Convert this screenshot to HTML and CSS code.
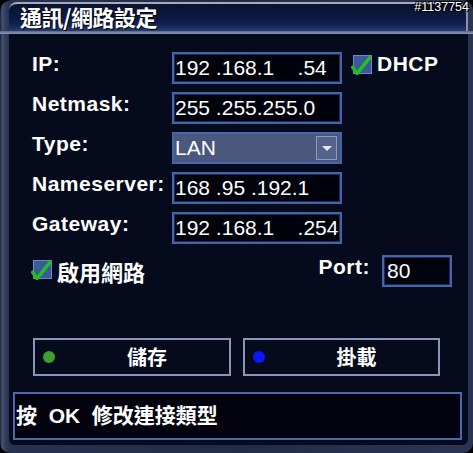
FILE: index.html
```html
<!DOCTYPE html>
<html>
<head>
<meta charset="utf-8">
<link rel="stylesheet" href="styles.css">
</head>
<body>
<div class="window">
  <div class="title-row">
    <div class="titlebar"><span class="title">通訊/網路設定</span></div>
  </div>
  <div class="sep"></div>
  <div class="frame-body">
    <div class="panel">
      <div class="form">
        <div class="label">IP:</div>
        <div class="field">192 .168.1    .54</div>
        <div class="check-cell">
          <svg class="check" width="22" height="20" viewBox="0 0 22 20"><rect x="2.5" y="0.5" width="18" height="18" fill="#3a5a9c" stroke="#6a88c4"/><path d="M0.8 11 L6 18.6 L19.5 1.6" fill="none" stroke="#1fc21f" stroke-width="3.4" stroke-linejoin="round"/></svg>
          <span class="label">DHCP</span>
        </div>
        <div class="label">Netmask:</div>
        <div class="field">255 .255.255.0</div>
        <div></div>
        <div class="label">Type:</div>
        <div class="field dropdown"><span>LAN</span><span class="arrow"><span class="tri"></span></span></div>
        <div></div>
        <div class="label">Nameserver:</div>
        <div class="field">168 .95 .192.1</div>
        <div></div>
        <div class="label">Gateway:</div>
        <div class="field">192 .168.1    .254</div>
        <div></div>
      </div>
      <div class="opts">
        <div class="opt-left">
          <svg class="check check-net" width="22" height="20" viewBox="0 0 22 20"><rect x="2.5" y="0.5" width="18" height="18" fill="#3a5a9c" stroke="#6a88c4"/><path d="M0.8 11 L6 18.6 L19.5 1.6" fill="none" stroke="#1fc21f" stroke-width="3.4" stroke-linejoin="round"/></svg>
          <span class="cjk-label">啟用網路</span>
        </div>
        <div class="opt-right">
          <span class="label">Port:</span>
          <div class="field port">80</div>
        </div>
      </div>
      <div class="buttons">
        <div class="btn"><span class="dot dot-green"></span><span class="btn-text">儲存</span></div>
        <div class="btn btn-2"><span class="dot dot-blue"></span><span class="btn-text">掛載</span></div>
      </div>
      <div class="status"><span class="status-text">按  OK  修改連接類型</span></div>
    </div>
  </div>
  <div class="watermark">#1137754</div>
</div>
</body>
</html>
```
FILE: styles.css
```css
html, body {
  margin: 0;
  padding: 0;
  background: #000;
}
body {
  width: 473px;
  height: 453px;
  overflow: hidden;
}
.window {
  position: relative;
  width: 473px;
  height: 453px;
  box-sizing: border-box;
  display: flex;
  flex-direction: column;
  border-radius: 12px 10px 10px 10px;
  background: linear-gradient(to right, #141a2c 0, #46526e 2px, #33405e 5px, #27324e 9px, #222c46 50%, #2a3552 100%);
  font-family: "Liberation Sans", "Noto Sans CJK TC", sans-serif;
  color: #fff;
  overflow: hidden;
}
.title-row {
  height: 31px;
  box-sizing: border-box;
  padding: 2px 5px 0 9px;
}
.titlebar {
  height: 29px;
  box-sizing: border-box;
  border-top: 2px solid #a3abbd;
  border-right: 2px solid #8a93ab;
  border-radius: 8px 12px 0 0;
  background: linear-gradient(to bottom, #0a122e 0%, #0c1a44 60%, #15295a 85%, #2a3f72 100%);
  padding-left: 11px;
  display: flex;
  align-items: center;
}
.title {
  font-family: "Noto Sans CJK TC", "Liberation Sans", sans-serif;
  font-weight: bold;
  font-size: 22px;
  line-height: 24px;
  margin-top: -4px;
  letter-spacing: -0.5px;
  text-shadow: 1px 1px 0 #000;
}
.sep {
  height: 3px;
  background: linear-gradient(to bottom, #56668e, #8e9cbc);
}
.frame-body {
  flex: 1;
  display: flex;
  padding: 0 5px 8px 9px;
}
.panel {
  flex: 1;
  background: #050a1c;
  border-radius: 0 0 6px 6px;
  display: flex;
  flex-direction: column;
}
.form {
  margin: 18px 0 0 23px;
  display: grid;
  grid-template-columns: 140px 170px auto;
  grid-auto-rows: 32px;
  row-gap: 8px;
}
.label {
  font-weight: bold;
  font-size: 21px;
  letter-spacing: 0.5px;
  line-height: 23px;
  white-space: nowrap;
}
.field {
  box-sizing: border-box;
  height: 32px;
  border: 2px solid #4466a8;
  box-shadow: inset 0 0 0 1px #1c2c5c;
  background: #00020c;
  font-size: 21px;
  line-height: 28px;
  padding-left: 1px;
  white-space: pre;
}
.dropdown {
  background: #49587c;
  box-shadow: none;
  display: flex;
  justify-content: space-between;
  align-items: center;
  padding-right: 3px;
}
.arrow {
  width: 21px;
  height: 24px;
  box-sizing: border-box;
  border: 1px solid #8e9cc2;
  background: #52628a;
  display: flex;
  align-items: center;
  justify-content: center;
}
.tri {
  width: 0;
  height: 0;
  border-left: 5px solid transparent;
  border-right: 5px solid transparent;
  border-top: 5px solid #e6e9f2;
}
.check-cell {
  display: flex;
  align-items: flex-start;
  padding-left: 9px;
  gap: 4px;
}
.check {
  display: block;
  margin-top: 3px;
  flex: none;
}
.opts {
  margin: 11px 0 0 23px;
  width: 420px;
  height: 32px;
  display: flex;
  justify-content: space-between;
}
.opt-left {
  display: flex;
  align-items: flex-start;
  gap: 4px;
}
.check-net {
  margin-top: 5px;
  margin-left: -1px;
}
.cjk-label {
  font-family: "Noto Sans CJK TC", sans-serif;
  font-weight: bold;
  font-size: 22px;
  line-height: 32px;
}
.opt-right {
  display: flex;
  align-items: flex-start;
}
.port {
  width: 70px;
  margin-left: 12px;
  padding-left: 3px;
}
.buttons {
  margin: 51px 0 0 24px;
  display: flex;
  gap: 12px;
}
.btn {
  width: 198px;
  height: 38px;
  box-sizing: border-box;
  border: 2px solid #8a96b8;
  display: flex;
  align-items: center;
}
.btn-2 {
  width: 197px;
}
.dot {
  width: 12px;
  height: 12px;
  border-radius: 50%;
  margin-left: 8px;
  flex: none;
}
.dot-green {
  background: #3aa02a;
}
.dot-blue {
  background: #0c16ff;
}
.btn-text {
  flex: 1;
  text-align: center;
  padding-left: 10px;
  font-family: "Noto Sans CJK TC", sans-serif;
  font-weight: bold;
  font-size: 20px;
  line-height: 24px;
}
.status {
  margin: 16px 0 0 4px;
  width: 449px;
  height: 48px;
  box-sizing: border-box;
  border: 2px solid #4a69a8;
  background: #02030e;
  display: flex;
  align-items: center;
  padding-left: 1px;
}
.status-text {
  font-weight: bold;
  font-size: 21px;
  line-height: 28px;
  white-space: pre;
}
.watermark {
  position: absolute;
  top: 0;
  right: 4px;
  font-size: 12.5px;
  line-height: 14px;
  color: #fff;
  text-shadow: 1px 1px 0 #000, -1px -1px 0 #000, 1px -1px 0 #000, -1px 1px 0 #000;
}
```
